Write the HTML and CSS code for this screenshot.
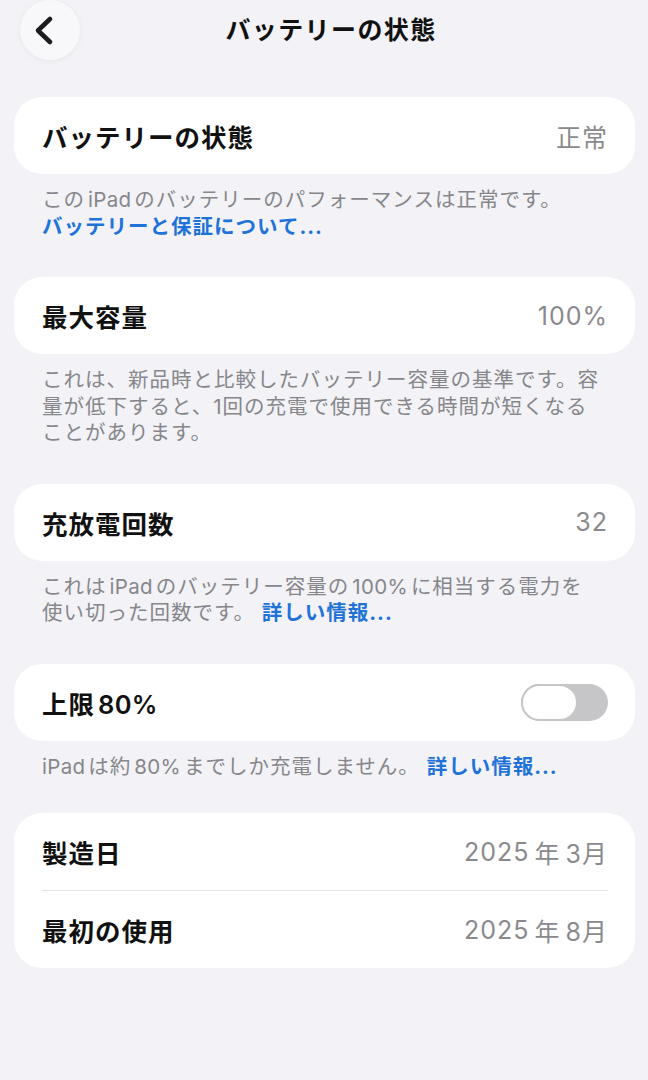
FILE: index.html
```html
<!DOCTYPE html>
<html lang="ja">
<head>
<meta charset="utf-8">
<title>バッテリーの状態</title>
<link rel="stylesheet" href="styles.css">
</head>
<body>
<div class="screen">
  <header class="nav">
    <div class="nav-left">
      <button class="back" aria-label="戻る">
        <svg width="60" height="60" viewBox="0 0 60 60"><path d="M30 19 L18 30.5 L30 42" fill="none" stroke="#1c1c1e" stroke-width="4.6" stroke-linecap="round" stroke-linejoin="round"/></svg>
      </button>
    </div>
    <h1 class="title">バッテリーの状態</h1>
    <div class="nav-right"></div>
  </header>

  <main class="content">
    <section class="group">
      <div class="card">
        <div class="row"><span class="label">バッテリーの状態</span><span class="value">正常</span></div>
      </div>
      <p class="footer">この<span class="lat">iPad</span>のバッテリーのパフォーマンスは正常です。<br><a class="link">バッテリーと保証について...</a></p>
    </section>

    <section class="group">
      <div class="card">
        <div class="row"><span class="label">最大容量</span><span class="value">100%</span></div>
      </div>
      <p class="footer">これは、新品時と比較したバッテリー容量の基準です。容量が低下すると、1回の充電で使用できる時間が短くなることがあります。</p>
    </section>

    <section class="group">
      <div class="card">
        <div class="row"><span class="label">充放電回数</span><span class="value">32</span></div>
      </div>
      <p class="footer">これは<span class="lat">iPad</span>のバッテリー容量の<span class="lat">100%</span>に相当する電力を<br>使い切った回数です。 <a class="link">詳しい情報...</a></p>
    </section>

    <section class="group">
      <div class="card">
        <div class="row"><span class="label">上限<span class="lat">80%</span></span><span class="toggle"><span class="knob"></span></span></div>
      </div>
      <p class="footer"><span class="lat first">iPad</span>は約<span class="lat">80%</span>までしか充電しません。 <a class="link">詳しい情報...</a></p>
    </section>

    <section class="group group-last">
      <div class="card">
        <div class="row"><span class="label">製造日</span><span class="value">2025<span class="gap"></span>年<span class="gap"></span>3月</span></div>
        <div class="sep"></div>
        <div class="row"><span class="label">最初の使用</span><span class="value">2025<span class="gap"></span>年<span class="gap"></span>8月</span></div>
      </div>
    </section>
  </main>
</div>
</body>
</html>
```

FILE: styles.css
```css
html, body {
  margin: 0;
  padding: 0;
}

body {
  background: #f2f2f7;
  font-family: Inter, "Noto Sans CJK JP", sans-serif;
  color: #111111;
  width: 648px;
  height: 1080px;
  overflow: hidden;
}

.screen {
  display: flex;
  flex-direction: column;
}

.nav {
  display: grid;
  grid-template-columns: 1fr auto 1fr;
  align-items: center;
  height: 60px;
}

.nav-left {
  padding-left: 20px;
  display: flex;
}

.back {
  width: 60px;
  height: 60px;
  border-radius: 50%;
  border: none;
  padding: 0;
  margin: 0;
  background: #f8f8fa;
  box-shadow: 0 1px 6px rgba(0, 0, 0, 0.05);
  display: flex;
  align-items: center;
  justify-content: center;
}

.back svg {
  display: block;
}

.title {
  margin: 0;
  font-size: 25px;
  font-weight: 700;
  letter-spacing: 1.4px;
  color: #111111;
  line-height: 30px;
  padding-left: 14px;
}

.content {
  display: flex;
  flex-direction: column;
  gap: 37px;
  padding: 37px 13px 0 14px;
}

.group {
  display: flex;
  flex-direction: column;
}

.group-last {
  margin-top: -4px;
}

.card {
  background: #ffffff;
  border-radius: 28px;
  display: flex;
  flex-direction: column;
}

.row {
  height: 77px;
  display: flex;
  align-items: center;
  justify-content: space-between;
  padding: 0 27px 0 28px;
}

.label {
  font-size: 25.5px;
  font-weight: 700;
  letter-spacing: 1px;
  color: #111111;
}

.label .lat {
  margin-left: 3px;
  letter-spacing: 0.3px;
  font-weight: 600;
}

.value {
  font-size: 25px;
  letter-spacing: 1px;
  color: #8a8a8e;
  display: flex;
  align-items: center;
}

.gap {
  display: inline-block;
  width: 5px;
}

.sep {
  height: 1px;
  background: #e3e3e7;
  margin: 0 27px 0 28px;
}

.footer {
  margin: 0;
  padding: 13px 28px 0 28px;
  font-size: 20.5px;
  letter-spacing: 1px;
  line-height: 26.5px;
  color: #86868b;
}

.footer .lat {
  margin: 0 3px;
  letter-spacing: 0.3px;
}

.footer .lat.first {
  margin-left: 0;
}

.link {
  color: #1f72d8;
  font-weight: 700;
}

.toggle {
  position: relative;
  width: 87px;
  height: 37px;
  border-radius: 19px;
  background: #c6c6c8;
  display: block;
}

.knob {
  position: absolute;
  left: 0;
  top: 0;
  width: 57px;
  height: 37px;
  box-sizing: border-box;
  border-radius: 19px;
  background: #ffffff;
  border: 2px solid #c6c6c8;
}
```
